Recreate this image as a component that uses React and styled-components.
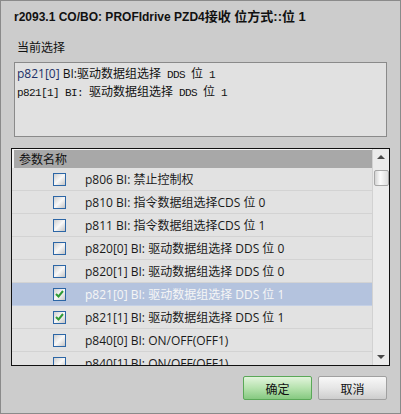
import styled, { createGlobalStyle } from 'styled-components'

const Global = createGlobalStyle`
    body {
        margin: 0;
        background: #cccccc;
        font-family: "Open Sans", "Noto Sans CJK SC", sans-serif;
    }
`
const Window = styled.div`
    box-sizing: border-box;
    width: 401px;
    height: 414px;
    border: 1px solid #8a8a8a;
    background: #cccccc;
    display: flex;
    flex-direction: column;
    padding: 8px 13px 0 10px;
`
const Title = styled.div`
    font-family: "Liberation Sans", "Noto Sans CJK SC", sans-serif;
    font-weight: bold;
    font-size: 12px;
    line-height: 16px;
    color: #111;
    padding-left: 3px;
    white-space: nowrap;
`
const TitleWide = styled.span`
    font-size: 13px;
`
const Label = styled.div`
    font-family: "Noto Sans CJK SC", sans-serif;
    font-size: 12px;
    line-height: 16px;
    color: #111;
    margin: 14px 0 0 6px;
`
const SelBox = styled.div`
    box-sizing: border-box;
    margin: 7px 0 0 3px;
    height: 75px;
    border: 1px solid #8a8a8a;
    background: #e1e1e1;
    padding: 2px 2px;
    color: #111;
`
const SelLine = styled.div`
    font-size: 12px;
    line-height: 16px;
    white-space: nowrap;
`
const Sans = styled.span`
    font-family: "Open Sans", sans-serif;
    color: ${p => p.$tint || '#111'};
`
const Mono = styled.span`
    font-family: "Liberation Mono", monospace;
    font-size: 11px;
    letter-spacing: -0.6px;
`
const Cjk = styled.span`
    font-family: "Noto Sans CJK SC", sans-serif;
    font-size: 12px;
`
const ListBox = styled.div`
    box-sizing: border-box;
    margin-top: 11px;
    width: 379px;
    height: 218px;
    border: 1px solid #111;
    display: flex;
    overflow: hidden;
`
const ListBody = styled.div`
    flex: 1;
    display: flex;
    flex-direction: column;
    overflow: hidden;
`
const Header = styled.div`
    box-sizing: border-box;
    flex: none;
    height: 19px;
    background: #a8a8a8;
    border-top: 1px solid #f4f4f4;
    border-left: 2px solid #f4f4f4;
    padding-left: 5px;
    font-family: "Noto Sans CJK SC", sans-serif;
    font-size: 12px;
    line-height: 17px;
    color: #111;
`
const Row = styled.div`
    box-sizing: border-box;
    flex: none;
    height: 23px;
    display: flex;
    align-items: center;
    gap: 19px;
    padding-left: 41px;
    background: ${p => (p.$selected ? '#b4c3de' : '#e2e2e2')};
    border-bottom: 1px solid ${p => (p.$selected ? '#c4d0e6' : '#d3d3d3')};
    font-size: 12px;
    color: ${p => (p.$selected ? '#f6f6f6' : '#1a1a1a')};
    white-space: nowrap;
`
const Check = styled.span`
    box-sizing: border-box;
    width: 13px;
    height: 13px;
    border: 1px solid #2c66a6;
    background: linear-gradient(135deg, #cfcfcf 0%, #f8f8f8 50%, #c4c4c4 100%);
    display: flex;
    align-items: center;
    justify-content: center;
`
const Scroll = styled.div`
    flex: none;
    width: 16px;
    background: #ebebeb;
    border-left: 1px solid #d2d2d2;
    display: flex;
    flex-direction: column;
    align-items: center;
`
const Arrow = styled.div`
    width: 0;
    height: 0;
    border-left: 4px solid transparent;
    border-right: 4px solid transparent;
    margin-top: ${p => p.$mt};
    margin-bottom: ${p => p.$mb || '0'};
    ${p => (p.$down ? 'border-top: 4px solid #4a4a4a;' : 'border-bottom: 4px solid #4a4a4a;')}
`
const Thumb = styled.div`
    box-sizing: border-box;
    width: 15px;
    height: 16px;
    margin-top: 11px;
    border: 1px solid #a6a6a6;
    border-radius: 2px;
    background: linear-gradient(90deg, #d4d4d4, #fbfbfb 40%, #dcdcdc);
`
const Spacer = styled.div`
    flex: 1;
`
const Buttons = styled.div`
    display: flex;
    justify-content: flex-end;
    gap: 6px;
    margin-top: 10px;
`
const Button = styled.button`
    box-sizing: border-box;
    width: 69px;
    height: 24px;
    border-radius: 2px;
    border: 1px solid ${p => (p.$primary ? '#5aa858' : '#a0a0a0')};
    background: ${p => (p.$primary
        ? 'linear-gradient(#e2f4dc, #b6e2ae 50%, #86c981)'
        : 'linear-gradient(#f8f8f8, #e6e6e6 50%, #cdcdcd)')};
    font-family: "Noto Sans CJK SC", sans-serif;
    font-size: 12px;
    color: #111;
    padding: 0;
`

const rows = [
    { code: 'p806 BI: ', text: '禁止控制权' },
    { code: 'p810 BI: ', text: '指令数据组选择CDS 位 0' },
    { code: 'p811 BI: ', text: '指令数据组选择CDS 位 1' },
    { code: 'p820[0] BI: ', text: '驱动数据组选择 DDS 位 0' },
    { code: 'p820[1] BI: ', text: '驱动数据组选择 DDS 位 0' },
    { code: 'p821[0] BI: ', text: '驱动数据组选择 DDS 位 1', checked: true, selected: true },
    { code: 'p821[1] BI: ', text: '驱动数据组选择 DDS 位 1', checked: true },
    { code: 'p840[0] BI: ', text: 'ON/OFF(OFF1)' },
    { code: 'p840[1] BI: ', text: 'ON/OFF(OFF1)' },
]

const Tick = () => (
    <svg width="9" height="8" viewBox="0 0 9 8">
        <path d="M1 4 L3.5 6.5 L8 1" fill="none" stroke="#2f9a35" strokeWidth="2" />
    </svg>
)

const App = () => {
  return (
    <Window>
        <Global />
        <Title>r2093.1 CO/BO: PROFIdrive PZD4<TitleWide>接收 位方式::位 1</TitleWide></Title>
        <Label>当前选择</Label>
        <SelBox>
            <SelLine>
                <Sans $tint="#1c2f66">p821[0]</Sans><Sans> BI:</Sans>
                <Cjk>驱动数据组选择</Cjk><Mono> DDS </Mono><Cjk>位</Cjk><Mono> 1</Mono>
            </SelLine>
            <SelLine>
                <Mono>p821[1] BI: </Mono><Cjk>驱动数据组选择</Cjk><Mono> DDS </Mono><Cjk>位</Cjk><Mono> 1</Mono>
            </SelLine>
        </SelBox>
        <ListBox>
            <ListBody>
                <Header>参数名称</Header>
                {rows.map((r, i) => (
                    <Row key={i} $selected={r.selected}>
                        <Check>{r.checked && <Tick />}</Check>
                        <span>{r.code}{r.text}</span>
                    </Row>
                ))}
            </ListBody>
            <Scroll>
                <Arrow $mt="6px" />
                <Thumb />
                <Spacer />
                <Arrow $down $mt="0" $mb="6px" />
            </Scroll>
        </ListBox>
        <Buttons>
            <Button $primary>确定</Button>
            <Button>取消</Button>
        </Buttons>
    </Window>
  )
}

export default App
